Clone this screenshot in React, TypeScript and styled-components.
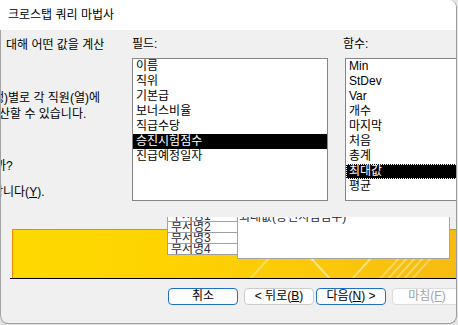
import styled, { createGlobalStyle } from 'styled-components';

const GlobalStyle = createGlobalStyle`
  * {
    margin: 0;
    padding: 0;
    box-sizing: border-box;
  }

  body {
    background: #e4e4e4;
    font-family: 'Liberation Sans', 'Noto Sans CJK KR', sans-serif;
    font-size: 12px;
    color: #000;
    overflow: hidden;
  }
`;

const Window = styled.div`
  width: 457px;
  height: 324px;
  background: #f0f0f0;
  border-right: 1px solid #9c9c9c;
  border-bottom: 1px solid #9c9c9c;
  border-top-right-radius: 8px;
  border-bottom-left-radius: 8px;
  border-bottom-right-radius: 8px;
  overflow: hidden;
  display: flex;
  flex-direction: column;
`;

const TitleBar = styled.div`
  height: 30px;
  flex-shrink: 0;
  background: #fff;
  padding: 1px 0 0 8px;
  line-height: 29px;
  font-size: 12px;
`;

const Body = styled.div`
  flex: 1;
  border-left: 1px solid #a2a2a2;
  border-bottom-left-radius: 8px;
  padding-top: 7px;
  display: flex;
  flex-direction: column;
`;

const TopSection = styled.div`
  display: flex;
  height: 164px;
`;

const TextColumn = styled.div`
  width: 125px;
  flex-shrink: 0;
  overflow: hidden;
`;

const TextLine = styled.p<{ $shift?: number; $top?: number }>`
  white-space: nowrap;
  line-height: 16px;
  margin-left: ${(p) => p.$shift ?? 0}px;
  margin-top: ${(p) => p.$top ?? 0}px;
`;

const ListColumn = styled.div<{ $offset: number; $width: number }>`
  margin-left: ${(p) => p.$offset}px;
  width: ${(p) => p.$width}px;
  flex-shrink: 0;
`;

const Label = styled.div`
  line-height: 15px;
  height: 15px;
  white-space: nowrap;
`;

const ListBox = styled.ul<{ $indent?: number }>`
  list-style: none;
  margin-top: 6px;
  margin-left: ${(p) => p.$indent ?? 0}px;
  height: 143px;
  background: #fff;
  border: 1px solid #868686;
  overflow: hidden;
`;

const ListItem = styled.li<{ $selected?: boolean; $focused?: boolean }>`
  height: 15px;
  line-height: 15px;
  padding-left: 3px;
  white-space: nowrap;
  background: ${(p) => (p.$selected ? '#000' : 'transparent')};
  color: ${(p) => (p.$selected ? '#fff' : '#000')};
  outline: ${(p) => (p.$focused ? '1px dotted #fff' : 'none')};
  outline-offset: -1px;
`;

const PreviewSection = styled.div`
  position: relative;
  height: 78px;
  padding: 28px 0 0 9px;
`;

const BannerFrame = styled.div`
  border-bottom: 1px solid #000;
`;

const Banner = styled.div`
  position: relative;
  margin-left: 2px;
  height: 49px;
  border-top: 1px solid #f08a00;
  border-left: 1px solid #f08a00;
  background: linear-gradient(100deg, #ffd900 0%, #fed300 35%, #fbc80a 70%, #f7bb10 100%);
  overflow: hidden;
`;

const Stripes = styled.svg`
  position: absolute;
  inset: 0;
`;

const TableOverlay = styled.div`
  position: absolute;
  top: 16px;
  left: 166px;
  width: 284px;
  height: 42px;
  overflow: hidden;
  display: flex;
  align-items: flex-start;
`;

const RowColumn = styled.div`
  width: 70px;
  margin-top: -6px;
  background: #fff;
`;

const RowCell = styled.div`
  height: 11px;
  border-left: 1px solid #a0a0a0;
  border-bottom: 1px solid #a0a0a0;
  padding-left: 3px;
  line-height: 10px;
  overflow: hidden;
  color: #2a2a3a;
  white-space: nowrap;
`;

const ValueBox = styled.div`
  width: 213px;
  height: 50px;
  margin-top: -8px;
  background: #fff;
  border: 1px solid #a4a4a4;
  padding-left: 1px;
  line-height: 14px;
  color: #2a2a3a;
  white-space: nowrap;
`;

const ButtonRow = styled.div`
  display: flex;
  margin-top: 9px;
  padding-left: 167px;
  gap: 6px;
`;

const NavGroup = styled.div`
  display: flex;
  gap: 2px;
`;

type Variant = 'primary' | 'normal' | 'disabled';

const Button = styled.button<{ $variant: Variant }>`
  width: 70px;
  height: 17px;
  flex-shrink: 0;
  font-family: inherit;
  font-size: 12px;
  line-height: 15px;
  border-radius: 4px;
  background: #fdfdfd;
  border: 1px solid
    ${(p) => (p.$variant === 'primary' ? '#1f6fc5' : p.$variant === 'disabled' ? '#dcdcdc' : '#cccccc')};
  color: ${(p) => (p.$variant === 'disabled' ? '#a3a3a3' : '#000')};
  white-space: nowrap;
`;

const fields = ['이름', '직위', '기본급', '보너스비율', '직급수당', '승진시험점수', '진급예정일자'];
const functions = ['Min', 'StDev', 'Var', '개수', '마지막', '처음', '총계', '최대값', '평균'];

function App() {
  return (
    <>
      <GlobalStyle />
      <Window>
        <TitleBar>크로스탭 쿼리 마법사</TitleBar>
        <Body>
          <TopSection>
            <TextColumn>
              <TextLine $shift={5}>대해 어떤 값을 계산</TextLine>
              <TextLine $shift={-8} $top={37}>
                행)별로 각 직원(열)에
              </TextLine>
              <TextLine $shift={-2}>산할 수 있습니다.</TextLine>
              <TextLine $shift={-6} $top={36}>
                까?
              </TextLine>
              <TextLine $shift={-9} $top={10}>
                합니다(<u>Y</u>).
              </TextLine>
            </TextColumn>

            <ListColumn $offset={6} $width={196}>
              <Label>필드:</Label>
              <ListBox>
                {fields.map((f) => (
                  <ListItem key={f} $selected={f === '승진시험점수'}>
                    {f}
                  </ListItem>
                ))}
              </ListBox>
            </ListColumn>

            <ListColumn $offset={15} $width={130}>
              <Label>함수:</Label>
              <ListBox $indent={2}>
                {functions.map((f) => (
                  <ListItem key={f} $selected={f === '최대값'} $focused={f === '최대값'}>
                    {f}
                  </ListItem>
                ))}
              </ListBox>
            </ListColumn>
          </TopSection>

          <PreviewSection>
            <BannerFrame>
              <Banner>
                <Stripes width="443" height="48">
                  <g stroke="#fff" strokeWidth="2" fill="none">
                    <line x1="236" y1="50" x2="258" y2="26" opacity="0.35" />
                    <line x1="296" y1="26" x2="318" y2="50" opacity="0.55" />
                    <line x1="338" y1="50" x2="360" y2="26" opacity="0.45" />
                    <line x1="366" y1="50" x2="388" y2="26" opacity="0.35" />
                    <line x1="374" y1="50" x2="396" y2="26" opacity="0.35" />
                    <line x1="382" y1="50" x2="404" y2="26" opacity="0.35" />
                    <line x1="390" y1="50" x2="412" y2="26" opacity="0.35" />
                    <line x1="398" y1="50" x2="420" y2="26" opacity="0.3" />
                  </g>
                </Stripes>
              </Banner>
            </BannerFrame>
            <TableOverlay>
              <RowColumn>
                <RowCell>부서명1</RowCell>
                <RowCell>부서명2</RowCell>
                <RowCell>부서명3</RowCell>
                <RowCell>부서명4</RowCell>
              </RowColumn>
              <ValueBox>최대값(승진시험점수)</ValueBox>
            </TableOverlay>
          </PreviewSection>

          <ButtonRow>
            <Button $variant="primary">취소</Button>
            <NavGroup>
              <Button $variant="normal">
                &lt; 뒤로(<u>B</u>)
              </Button>
              <Button $variant="primary">
                다음(<u>N</u>) &gt;
              </Button>
            </NavGroup>
            <Button $variant="disabled" disabled>
              마침(<u>F</u>)
            </Button>
          </ButtonRow>
        </Body>
      </Window>
    </>
  );
}

export default App;
